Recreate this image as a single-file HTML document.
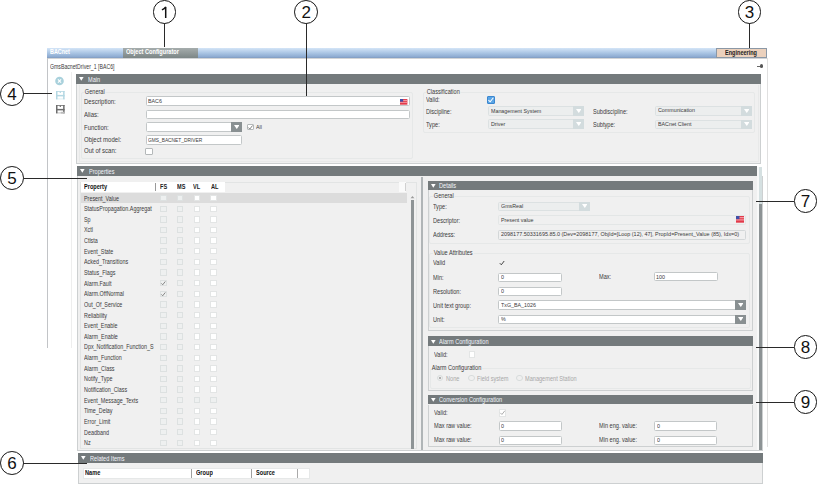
<!DOCTYPE html>
<html><head><meta charset="utf-8"><style>
html,body{margin:0;padding:0;width:818px;height:487px;overflow:hidden;background:#fff;position:relative}
div{position:absolute;box-sizing:border-box}
span.t{position:absolute;white-space:nowrap;font-family:"Liberation Sans",sans-serif;transform-origin:0 50%}
span.num{position:absolute;width:23.8px;height:23.8px;line-height:23.8px;text-align:center;font-family:"Liberation Sans",sans-serif;font-size:17px;color:#111}
.circ{width:23.8px;height:23.8px;border:1.15px solid #141414;border-radius:50%;background:#fff}
</style></head><body>
<div style="left:47.00px;top:47.50px;width:719.70px;height:10.20px;background:linear-gradient(#d4e5f7,#aac5e4 50%,#8aa8cf 92%,#7d95b8)"></div>
<span class="t" style="left:50.40px;top:49.40px;font-size:6.4px;line-height:6.4px;transform:scaleX(0.85);color:#fff;font-weight:bold;">BACnet</span>
<div style="left:122.60px;top:47.70px;width:75.50px;height:10.00px;background:linear-gradient(#a6adad,#7c8686)"></div>
<span class="t" style="left:126.00px;top:49.30px;font-size:6.6px;line-height:6.6px;transform:scaleX(0.85);color:#fff;font-weight:bold;">Object Configurator</span>
<div style="left:716.30px;top:48.30px;width:50.40px;height:9.40px;background:#ebd1bd;border:1px solid #8b98a6;box-sizing:border-box"></div>
<span class="t" style="left:725.00px;top:49.50px;font-size:6.6px;line-height:6.6px;transform:scaleX(0.84);color:#1c1c1c;font-weight:bold;">Engineering</span>
<div style="left:47.00px;top:57.80px;width:719.70px;height:1.00px;background:#d2d4d6"></div>
<div style="left:47.00px;top:57.70px;width:1.00px;height:290.00px;background:#c2c4c7"></div>
<div style="left:766.50px;top:57.70px;width:1.00px;height:389.30px;background:#e0e0e0"></div>
<span class="t" style="left:50.40px;top:62.50px;font-size:7.0px;line-height:7.0px;transform:scaleX(0.74);color:#3a3a3a;">GmsBacnetDriver_1 [BAC6]</span>
<div style="left:759.50px;top:64.40px;width:3.50px;height:3.50px;background:#555;border-radius:50%"></div>
<div style="left:757.20px;top:65.70px;width:2.80px;height:1.00px;background:#666"></div>
<svg style="position:absolute;left:54px;top:76px" width="11" height="11" viewBox="0 0 11 11"><circle cx="5.5" cy="5" r="4.3" fill="#a9d1dc"/><path d="M3.9 3.4 L7.1 6.6 M7.1 3.4 L3.9 6.6" stroke="#fff" stroke-width="1.2"/></svg>
<svg style="position:absolute;left:55.6px;top:91px" width="9" height="9" viewBox="0 0 9 9"><rect x="0" y="0" width="1.5" height="8.3" fill="#b4d8e3"/><rect x="7.1" y="0" width="1.5" height="8.3" fill="#b4d8e3"/><rect x="0" y="0" width="8.6" height="0.8" fill="#b4d8e3"/><rect x="0" y="3.9" width="8.6" height="1.5" fill="#b4d8e3"/><rect x="0" y="7.6" width="8.6" height="0.7" fill="#b4d8e3" opacity="0.6"/><rect x="3.7" y="0.5" width="1.2" height="1.5" fill="#b4d8e3"/></svg>
<svg style="position:absolute;left:55.6px;top:105.1px" width="9" height="9" viewBox="0 0 9 9"><rect x="0" y="0" width="1.5" height="8.3" fill="#6e6e6e"/><rect x="7.1" y="0" width="1.5" height="8.3" fill="#6e6e6e"/><rect x="0" y="0" width="8.6" height="0.8" fill="#6e6e6e"/><rect x="0" y="3.9" width="8.6" height="1.5" fill="#6e6e6e"/><rect x="0" y="7.6" width="8.6" height="0.7" fill="#6e6e6e" opacity="0.6"/><rect x="3.7" y="0.5" width="1.2" height="1.5" fill="#6e6e6e"/><rect x="4.8" y="6.8" width="3.8" height="1.8" fill="#bbb"/></svg>
<div style="left:71.00px;top:72.00px;width:1.00px;height:275.50px;background:#eeeeee"></div>
<div style="left:76.30px;top:83.80px;width:685.00px;height:80.20px;background:#f0f0f0;border:1px solid #cdd0d1;border-top:none;box-sizing:border-box"></div>
<div style="left:76.30px;top:74.00px;width:685.00px;height:9.80px;background:#747a7c"></div>
<svg style="position:absolute;left:79.40px;top:77.30px" width="5" height="4" viewBox="0 0 5 4"><path d="M0 0 H4.6 L2.3 3.8 Z" fill="#fff"/></svg>
<span class="t" style="left:87.90px;top:75.60px;font-size:7.0px;line-height:7.0px;transform:scaleX(0.8);color:#f2f4fa;">Main</span>
<div style="left:79.30px;top:84.50px;width:679.30px;height:77.70px;border:1px solid #e8e9e9;border-top:none;box-sizing:border-box"></div>
<div style="left:80.90px;top:91.70px;width:332.60px;height:67.30px;border:1px solid #e6e8e8;border-radius:2px;box-sizing:border-box"></div>
<span class="t" style="left:83.90px;top:88.20px;font-size:7.0px;line-height:7.0px;transform:scaleX(0.8);color:#3a3a3a;background:#f0f0f0;padding:0 1px;">General</span>
<span class="t" style="left:83.80px;top:97.80px;font-size:7.0px;line-height:7.0px;transform:scaleX(0.86);color:#3a3a3a;">Description:</span>
<span class="t" style="left:83.80px;top:110.70px;font-size:7.0px;line-height:7.0px;transform:scaleX(0.86);color:#3a3a3a;">Alias:</span>
<span class="t" style="left:83.80px;top:123.50px;font-size:7.0px;line-height:7.0px;transform:scaleX(0.86);color:#3a3a3a;">Function:</span>
<span class="t" style="left:83.80px;top:136.40px;font-size:7.0px;line-height:7.0px;transform:scaleX(0.86);color:#3a3a3a;">Object model:</span>
<span class="t" style="left:83.80px;top:147.20px;font-size:7.0px;line-height:7.0px;transform:scaleX(0.86);color:#3a3a3a;">Out of scan:</span>
<div style="left:145.50px;top:96.40px;width:264.50px;height:10.10px;background:#fff;border:1px solid #c3c7c8;border-radius:1.5px;box-sizing:border-box"></div>
<span class="t" style="left:148.30px;top:98.10px;font-size:6.2px;line-height:6.2px;transform:scaleX(0.86);color:#3a3a3a;">BAC6</span>
<svg style="position:absolute;left:400.40px;top:98.90px" width="7.40" height="5.70" viewBox="0 0 8 6" preserveAspectRatio="none"><rect width="8" height="6" fill="#e23a4a"/><rect y="1" width="8" height="1" fill="#f4a0a8"/><rect y="3" width="8" height="1" fill="#f4a0a8"/><rect width="3.4" height="2.8" fill="#4050a8"/></svg>
<div style="left:145.50px;top:109.70px;width:264.50px;height:9.80px;background:#fff;border:1px solid #c3c7c8;border-radius:1.5px;box-sizing:border-box"></div>
<div style="left:145.50px;top:122.20px;width:96.60px;height:10.20px;background:#fff;border:1px solid #c3c7c8;border-radius:1.5px;box-sizing:border-box"></div>
<div style="left:231.10px;top:122.20px;width:11.00px;height:10.20px;background:#899092"></div>
<svg style="position:absolute;left:233.80px;top:125.30px" width="5.6" height="4.2" viewBox="0 0 5.6 4.2"><path d="M0 0 H5.6 L2.8 4.1 Z" fill="#fff"/></svg>
<div style="left:247.00px;top:123.80px;width:6.80px;height:6.70px;background:#fff;border:1px solid #b4b8b9;border-radius:1px;box-sizing:border-box"></div>
<svg style="position:absolute;left:247.00px;top:123.80px" width="6.80" height="6.70" viewBox="0 0 8 8"><path d="M1.5 4.2 L3.3 6 L6.6 1.8" fill="none" stroke="#777" stroke-width="1.1"/></svg>
<span class="t" style="left:256.00px;top:123.90px;font-size:6.2px;line-height:6.2px;transform:scaleX(0.86);color:#3a3a3a;">All</span>
<div style="left:145.50px;top:135.40px;width:96.90px;height:9.80px;background:#fff;border:1px solid #c3c7c8;border-radius:1.5px;box-sizing:border-box"></div>
<span class="t" style="left:148.30px;top:136.90px;font-size:6.2px;line-height:6.2px;transform:scaleX(0.78);color:#3a3a3a;">GMS_BACNET_DRIVER</span>
<div style="left:145.40px;top:148.00px;width:7.40px;height:6.60px;background:#fff;border:1px solid #b4b8b9;border-radius:1px;box-sizing:border-box"></div>
<div style="left:423.40px;top:92.40px;width:332.10px;height:40.60px;border:1px solid #e6e8e8;border-radius:2px;box-sizing:border-box"></div>
<span class="t" style="left:426.40px;top:87.90px;font-size:7.0px;line-height:7.0px;transform:scaleX(0.8);color:#3a3a3a;background:#f0f0f0;padding:0 1px;">Classification</span>
<span class="t" style="left:425.80px;top:96.30px;font-size:7.0px;line-height:7.0px;transform:scaleX(0.8);color:#3a3a3a;">Valid:</span>
<span class="t" style="left:425.80px;top:107.70px;font-size:7.0px;line-height:7.0px;transform:scaleX(0.8);color:#3a3a3a;">Discipline:</span>
<span class="t" style="left:425.80px;top:120.60px;font-size:7.0px;line-height:7.0px;transform:scaleX(0.8);color:#3a3a3a;">Type:</span>
<div style="left:487.20px;top:96.10px;width:7.70px;height:7.70px;background:#5aa5e6;border:1px solid #3a86cf;border-radius:1px;box-sizing:border-box"></div>
<svg style="position:absolute;left:487.20px;top:96.10px" width="7.70" height="7.70" viewBox="0 0 8 8"><path d="M1.5 4.2 L3.3 6 L6.6 1.8" fill="none" stroke="#fff" stroke-width="1.1"/></svg>
<div style="left:487.60px;top:106.00px;width:96.50px;height:10.00px;background:#eceeee;border:1px solid #dce1e2;border-radius:1.5px;box-sizing:border-box"></div>
<div style="left:573.10px;top:106.00px;width:11.00px;height:10.00px;background:#d3dcde"></div>
<svg style="position:absolute;left:575.80px;top:109.00px" width="5.6" height="4.2" viewBox="0 0 5.6 4.2"><path d="M0 0 H5.6 L2.8 4.1 Z" fill="#fff"/></svg>
<span class="t" style="left:490.60px;top:107.50px;font-size:6.2px;line-height:6.2px;transform:scaleX(0.86);color:#3a3a3a;">Management System</span>
<div style="left:487.60px;top:119.20px;width:96.50px;height:10.00px;background:#eceeee;border:1px solid #dce1e2;border-radius:1.5px;box-sizing:border-box"></div>
<div style="left:573.10px;top:119.20px;width:11.00px;height:10.00px;background:#d3dcde"></div>
<svg style="position:absolute;left:575.80px;top:122.20px" width="5.6" height="4.2" viewBox="0 0 5.6 4.2"><path d="M0 0 H5.6 L2.8 4.1 Z" fill="#fff"/></svg>
<span class="t" style="left:490.60px;top:120.70px;font-size:6.2px;line-height:6.2px;transform:scaleX(0.86);color:#3a3a3a;">Driver</span>
<span class="t" style="left:593.40px;top:107.50px;font-size:7.0px;line-height:7.0px;transform:scaleX(0.8);color:#3a3a3a;">Subdiscipline:</span>
<span class="t" style="left:593.40px;top:120.60px;font-size:7.0px;line-height:7.0px;transform:scaleX(0.8);color:#3a3a3a;">Subtype:</span>
<div style="left:655.30px;top:106.00px;width:96.60px;height:9.80px;background:#eceeee;border:1px solid #dce1e2;border-radius:1.5px;box-sizing:border-box"></div>
<div style="left:740.90px;top:106.00px;width:11.00px;height:9.80px;background:#d3dcde"></div>
<svg style="position:absolute;left:743.60px;top:108.90px" width="5.6" height="4.2" viewBox="0 0 5.6 4.2"><path d="M0 0 H5.6 L2.8 4.1 Z" fill="#fff"/></svg>
<span class="t" style="left:658.30px;top:107.40px;font-size:6.2px;line-height:6.2px;transform:scaleX(0.86);color:#3a3a3a;">Communication</span>
<div style="left:655.30px;top:119.50px;width:96.60px;height:9.70px;background:#eceeee;border:1px solid #dce1e2;border-radius:1.5px;box-sizing:border-box"></div>
<div style="left:740.90px;top:119.50px;width:11.00px;height:9.70px;background:#d3dcde"></div>
<svg style="position:absolute;left:743.60px;top:122.35px" width="5.6" height="4.2" viewBox="0 0 5.6 4.2"><path d="M0 0 H5.6 L2.8 4.1 Z" fill="#fff"/></svg>
<span class="t" style="left:658.30px;top:120.85px;font-size:6.2px;line-height:6.2px;transform:scaleX(0.86);color:#3a3a3a;">BACnet Client</span>
<div style="left:76.50px;top:176.00px;width:686.30px;height:274.80px;background:#f0f0f0;border:1px solid #cdd0d1;border-top:none;box-sizing:border-box"></div>
<div style="left:77.00px;top:166.00px;width:679.70px;height:10.00px;background:#747a7c"></div>
<svg style="position:absolute;left:80.10px;top:169.30px" width="5" height="4" viewBox="0 0 5 4"><path d="M0 0 H4.6 L2.3 3.8 Z" fill="#fff"/></svg>
<span class="t" style="left:88.60px;top:167.70px;font-size:7.0px;line-height:7.0px;transform:scaleX(0.8);color:#f2f4fa;">Properties</span>
<div style="left:757.00px;top:166.50px;width:2.00px;height:283.30px;background:#f8f9f9"></div>
<div style="left:759.00px;top:166.50px;width:3.40px;height:37.10px;background:#d5e0e1"></div>
<div style="left:759.00px;top:203.60px;width:3.40px;height:246.20px;background:#8d9395"></div>
<div style="left:80.00px;top:181.50px;width:336.50px;height:267.10px;border:1px solid #e2e4e4;box-sizing:border-box;background:#f0f0f0"></div>
<div style="left:80.50px;top:182.00px;width:144.40px;height:9.80px;background:#fff"></div>
<div style="left:398.50px;top:182.00px;width:7.00px;height:9.80px;background:#fafafa"></div>
<div style="left:405.40px;top:183.00px;width:1.00px;height:7.50px;background:#d0d0d0"></div>
<div style="left:154.80px;top:183.00px;width:1.00px;height:7.50px;background:#9a9a9a"></div>
<span class="t" style="left:83.80px;top:183.10px;font-size:7.0px;line-height:7.0px;transform:scaleX(0.8);color:#111;font-weight:bold;">Property</span>
<span class="t" style="left:160.10px;top:183.10px;font-size:7.0px;line-height:7.0px;transform:scaleX(0.8);color:#222;font-weight:bold;">FS</span>
<span class="t" style="left:176.80px;top:183.10px;font-size:7.0px;line-height:7.0px;transform:scaleX(0.8);color:#222;font-weight:bold;">MS</span>
<span class="t" style="left:193.40px;top:183.10px;font-size:7.0px;line-height:7.0px;transform:scaleX(0.8);color:#222;font-weight:bold;">VL</span>
<span class="t" style="left:210.60px;top:183.10px;font-size:7.0px;line-height:7.0px;transform:scaleX(0.8);color:#222;font-weight:bold;">AL</span>
<div style="left:80.50px;top:193.40px;width:326.70px;height:9.20px;background:#dcdcdc"></div>
<span class="t" style="left:83.80px;top:194.50px;font-size:7.0px;line-height:7.0px;transform:scaleX(0.77);color:#3a3a3a;">Present_Value</span>
<div style="left:160.20px;top:194.90px;width:6.50px;height:6.40px;background:#eef0f0;border:1px solid #dde1e1;box-sizing:border-box"></div>
<div style="left:176.90px;top:194.90px;width:6.50px;height:6.40px;background:#eef0f0;border:1px solid #dde1e1;box-sizing:border-box"></div>
<div style="left:193.50px;top:194.90px;width:6.50px;height:6.40px;background:#fff;border:1px solid #e3e5e5;box-sizing:border-box"></div>
<div style="left:210.30px;top:194.90px;width:6.50px;height:6.40px;background:#fff;border:1px solid #e3e5e5;box-sizing:border-box"></div>
<span class="t" style="left:83.80px;top:205.14px;font-size:7.0px;line-height:7.0px;transform:scaleX(0.77);color:#3a3a3a;">StatusPropagation.Aggregat</span>
<div style="left:160.20px;top:205.54px;width:6.50px;height:6.40px;background:#eef0f0;border:1px solid #dde1e1;box-sizing:border-box"></div>
<div style="left:176.90px;top:205.54px;width:6.50px;height:6.40px;background:#eef0f0;border:1px solid #dde1e1;box-sizing:border-box"></div>
<div style="left:193.50px;top:205.54px;width:6.50px;height:6.40px;background:#fff;border:1px solid #e3e5e5;box-sizing:border-box"></div>
<div style="left:210.30px;top:205.54px;width:6.50px;height:6.40px;background:#fff;border:1px solid #e3e5e5;box-sizing:border-box"></div>
<span class="t" style="left:83.80px;top:215.78px;font-size:7.0px;line-height:7.0px;transform:scaleX(0.77);color:#3a3a3a;">Sp</span>
<div style="left:160.20px;top:216.18px;width:6.50px;height:6.40px;background:#eef0f0;border:1px solid #dde1e1;box-sizing:border-box"></div>
<div style="left:176.90px;top:216.18px;width:6.50px;height:6.40px;background:#eef0f0;border:1px solid #dde1e1;box-sizing:border-box"></div>
<div style="left:193.50px;top:216.18px;width:6.50px;height:6.40px;background:#fff;border:1px solid #e3e5e5;box-sizing:border-box"></div>
<div style="left:210.30px;top:216.18px;width:6.50px;height:6.40px;background:#fff;border:1px solid #e3e5e5;box-sizing:border-box"></div>
<span class="t" style="left:83.80px;top:226.42px;font-size:7.0px;line-height:7.0px;transform:scaleX(0.77);color:#3a3a3a;">Xctl</span>
<div style="left:160.20px;top:226.82px;width:6.50px;height:6.40px;background:#eef0f0;border:1px solid #dde1e1;box-sizing:border-box"></div>
<div style="left:176.90px;top:226.82px;width:6.50px;height:6.40px;background:#eef0f0;border:1px solid #dde1e1;box-sizing:border-box"></div>
<div style="left:193.50px;top:226.82px;width:6.50px;height:6.40px;background:#fff;border:1px solid #e3e5e5;box-sizing:border-box"></div>
<div style="left:210.30px;top:226.82px;width:6.50px;height:6.40px;background:#fff;border:1px solid #e3e5e5;box-sizing:border-box"></div>
<span class="t" style="left:83.80px;top:237.06px;font-size:7.0px;line-height:7.0px;transform:scaleX(0.77);color:#3a3a3a;">Ctlsta</span>
<div style="left:160.20px;top:237.46px;width:6.50px;height:6.40px;background:#eef0f0;border:1px solid #dde1e1;box-sizing:border-box"></div>
<div style="left:176.90px;top:237.46px;width:6.50px;height:6.40px;background:#eef0f0;border:1px solid #dde1e1;box-sizing:border-box"></div>
<div style="left:193.50px;top:237.46px;width:6.50px;height:6.40px;background:#fff;border:1px solid #e3e5e5;box-sizing:border-box"></div>
<div style="left:210.30px;top:237.46px;width:6.50px;height:6.40px;background:#fff;border:1px solid #e3e5e5;box-sizing:border-box"></div>
<span class="t" style="left:83.80px;top:247.70px;font-size:7.0px;line-height:7.0px;transform:scaleX(0.77);color:#3a3a3a;">Event_State</span>
<div style="left:160.20px;top:248.10px;width:6.50px;height:6.40px;background:#eef0f0;border:1px solid #dde1e1;box-sizing:border-box"></div>
<div style="left:176.90px;top:248.10px;width:6.50px;height:6.40px;background:#eef0f0;border:1px solid #dde1e1;box-sizing:border-box"></div>
<div style="left:193.50px;top:248.10px;width:6.50px;height:6.40px;background:#fff;border:1px solid #e3e5e5;box-sizing:border-box"></div>
<div style="left:210.30px;top:248.10px;width:6.50px;height:6.40px;background:#fff;border:1px solid #e3e5e5;box-sizing:border-box"></div>
<span class="t" style="left:83.80px;top:258.34px;font-size:7.0px;line-height:7.0px;transform:scaleX(0.77);color:#3a3a3a;">Acked_Transitions</span>
<div style="left:160.20px;top:258.74px;width:6.50px;height:6.40px;background:#eef0f0;border:1px solid #dde1e1;box-sizing:border-box"></div>
<div style="left:176.90px;top:258.74px;width:6.50px;height:6.40px;background:#eef0f0;border:1px solid #dde1e1;box-sizing:border-box"></div>
<div style="left:193.50px;top:258.74px;width:6.50px;height:6.40px;background:#fff;border:1px solid #e3e5e5;box-sizing:border-box"></div>
<div style="left:210.30px;top:258.74px;width:6.50px;height:6.40px;background:#fff;border:1px solid #e3e5e5;box-sizing:border-box"></div>
<span class="t" style="left:83.80px;top:268.98px;font-size:7.0px;line-height:7.0px;transform:scaleX(0.77);color:#3a3a3a;">Status_Flags</span>
<div style="left:160.20px;top:269.38px;width:6.50px;height:6.40px;background:#eef0f0;border:1px solid #dde1e1;box-sizing:border-box"></div>
<div style="left:176.90px;top:269.38px;width:6.50px;height:6.40px;background:#eef0f0;border:1px solid #dde1e1;box-sizing:border-box"></div>
<div style="left:193.50px;top:269.38px;width:6.50px;height:6.40px;background:#fff;border:1px solid #e3e5e5;box-sizing:border-box"></div>
<div style="left:210.30px;top:269.38px;width:6.50px;height:6.40px;background:#fff;border:1px solid #e3e5e5;box-sizing:border-box"></div>
<span class="t" style="left:83.80px;top:279.62px;font-size:7.0px;line-height:7.0px;transform:scaleX(0.77);color:#3a3a3a;">Alarm.Fault</span>
<div style="left:160.20px;top:280.02px;width:6.50px;height:6.40px;background:#eef0f0;border:1px solid #dde1e1;box-sizing:border-box"></div>
<svg style="position:absolute;left:160.20px;top:280.02px" width="6.50" height="6.40" viewBox="0 0 8 8"><path d="M1.5 4.2 L3.3 6 L6.6 1.8" fill="none" stroke="#777" stroke-width="1.1"/></svg>
<div style="left:176.90px;top:280.02px;width:6.50px;height:6.40px;background:#eef0f0;border:1px solid #dde1e1;box-sizing:border-box"></div>
<div style="left:193.50px;top:280.02px;width:6.50px;height:6.40px;background:#fff;border:1px solid #e3e5e5;box-sizing:border-box"></div>
<div style="left:210.30px;top:280.02px;width:6.50px;height:6.40px;background:#fff;border:1px solid #e3e5e5;box-sizing:border-box"></div>
<span class="t" style="left:83.80px;top:290.26px;font-size:7.0px;line-height:7.0px;transform:scaleX(0.77);color:#3a3a3a;">Alarm.OffNormal</span>
<div style="left:160.20px;top:290.66px;width:6.50px;height:6.40px;background:#eef0f0;border:1px solid #dde1e1;box-sizing:border-box"></div>
<svg style="position:absolute;left:160.20px;top:290.66px" width="6.50" height="6.40" viewBox="0 0 8 8"><path d="M1.5 4.2 L3.3 6 L6.6 1.8" fill="none" stroke="#777" stroke-width="1.1"/></svg>
<div style="left:176.90px;top:290.66px;width:6.50px;height:6.40px;background:#eef0f0;border:1px solid #dde1e1;box-sizing:border-box"></div>
<div style="left:193.50px;top:290.66px;width:6.50px;height:6.40px;background:#fff;border:1px solid #e3e5e5;box-sizing:border-box"></div>
<div style="left:210.30px;top:290.66px;width:6.50px;height:6.40px;background:#fff;border:1px solid #e3e5e5;box-sizing:border-box"></div>
<span class="t" style="left:83.80px;top:300.90px;font-size:7.0px;line-height:7.0px;transform:scaleX(0.77);color:#3a3a3a;">Out_Of_Service</span>
<div style="left:160.20px;top:301.30px;width:6.50px;height:6.40px;background:#eef0f0;border:1px solid #dde1e1;box-sizing:border-box"></div>
<div style="left:176.90px;top:301.30px;width:6.50px;height:6.40px;background:#eef0f0;border:1px solid #dde1e1;box-sizing:border-box"></div>
<div style="left:193.50px;top:301.30px;width:6.50px;height:6.40px;background:#fff;border:1px solid #e3e5e5;box-sizing:border-box"></div>
<div style="left:210.30px;top:301.30px;width:6.50px;height:6.40px;background:#fff;border:1px solid #e3e5e5;box-sizing:border-box"></div>
<span class="t" style="left:83.80px;top:311.54px;font-size:7.0px;line-height:7.0px;transform:scaleX(0.77);color:#3a3a3a;">Reliability</span>
<div style="left:160.20px;top:311.94px;width:6.50px;height:6.40px;background:#eef0f0;border:1px solid #dde1e1;box-sizing:border-box"></div>
<div style="left:176.90px;top:311.94px;width:6.50px;height:6.40px;background:#eef0f0;border:1px solid #dde1e1;box-sizing:border-box"></div>
<div style="left:193.50px;top:311.94px;width:6.50px;height:6.40px;background:#fff;border:1px solid #e3e5e5;box-sizing:border-box"></div>
<div style="left:210.30px;top:311.94px;width:6.50px;height:6.40px;background:#fff;border:1px solid #e3e5e5;box-sizing:border-box"></div>
<span class="t" style="left:83.80px;top:322.18px;font-size:7.0px;line-height:7.0px;transform:scaleX(0.77);color:#3a3a3a;">Event_Enable</span>
<div style="left:160.20px;top:322.58px;width:6.50px;height:6.40px;background:#eef0f0;border:1px solid #dde1e1;box-sizing:border-box"></div>
<div style="left:176.90px;top:322.58px;width:6.50px;height:6.40px;background:#eef0f0;border:1px solid #dde1e1;box-sizing:border-box"></div>
<div style="left:193.50px;top:322.58px;width:6.50px;height:6.40px;background:#fff;border:1px solid #e3e5e5;box-sizing:border-box"></div>
<div style="left:210.30px;top:322.58px;width:6.50px;height:6.40px;background:#fff;border:1px solid #e3e5e5;box-sizing:border-box"></div>
<span class="t" style="left:83.80px;top:332.82px;font-size:7.0px;line-height:7.0px;transform:scaleX(0.77);color:#3a3a3a;">Alarm_Enable</span>
<div style="left:160.20px;top:333.22px;width:6.50px;height:6.40px;background:#eef0f0;border:1px solid #dde1e1;box-sizing:border-box"></div>
<div style="left:176.90px;top:333.22px;width:6.50px;height:6.40px;background:#eef0f0;border:1px solid #dde1e1;box-sizing:border-box"></div>
<div style="left:193.50px;top:333.22px;width:6.50px;height:6.40px;background:#fff;border:1px solid #e3e5e5;box-sizing:border-box"></div>
<div style="left:210.30px;top:333.22px;width:6.50px;height:6.40px;background:#fff;border:1px solid #e3e5e5;box-sizing:border-box"></div>
<span class="t" style="left:83.80px;top:343.46px;font-size:7.0px;line-height:7.0px;transform:scaleX(0.77);color:#3a3a3a;">Dpx_Notification_Function_S</span>
<div style="left:160.20px;top:343.86px;width:6.50px;height:6.40px;background:#eef0f0;border:1px solid #dde1e1;box-sizing:border-box"></div>
<div style="left:176.90px;top:343.86px;width:6.50px;height:6.40px;background:#eef0f0;border:1px solid #dde1e1;box-sizing:border-box"></div>
<div style="left:193.50px;top:343.86px;width:6.50px;height:6.40px;background:#fff;border:1px solid #e3e5e5;box-sizing:border-box"></div>
<div style="left:210.30px;top:343.86px;width:6.50px;height:6.40px;background:#fff;border:1px solid #e3e5e5;box-sizing:border-box"></div>
<span class="t" style="left:83.80px;top:354.10px;font-size:7.0px;line-height:7.0px;transform:scaleX(0.77);color:#3a3a3a;">Alarm_Function</span>
<div style="left:160.20px;top:354.50px;width:6.50px;height:6.40px;background:#eef0f0;border:1px solid #dde1e1;box-sizing:border-box"></div>
<div style="left:176.90px;top:354.50px;width:6.50px;height:6.40px;background:#eef0f0;border:1px solid #dde1e1;box-sizing:border-box"></div>
<div style="left:193.50px;top:354.50px;width:6.50px;height:6.40px;background:#fff;border:1px solid #e3e5e5;box-sizing:border-box"></div>
<div style="left:210.30px;top:354.50px;width:6.50px;height:6.40px;background:#fff;border:1px solid #e3e5e5;box-sizing:border-box"></div>
<span class="t" style="left:83.80px;top:364.74px;font-size:7.0px;line-height:7.0px;transform:scaleX(0.77);color:#3a3a3a;">Alarm_Class</span>
<div style="left:160.20px;top:365.14px;width:6.50px;height:6.40px;background:#eef0f0;border:1px solid #dde1e1;box-sizing:border-box"></div>
<div style="left:176.90px;top:365.14px;width:6.50px;height:6.40px;background:#eef0f0;border:1px solid #dde1e1;box-sizing:border-box"></div>
<div style="left:193.50px;top:365.14px;width:6.50px;height:6.40px;background:#fff;border:1px solid #e3e5e5;box-sizing:border-box"></div>
<div style="left:210.30px;top:365.14px;width:6.50px;height:6.40px;background:#fff;border:1px solid #e3e5e5;box-sizing:border-box"></div>
<span class="t" style="left:83.80px;top:375.38px;font-size:7.0px;line-height:7.0px;transform:scaleX(0.77);color:#3a3a3a;">Notify_Type</span>
<div style="left:160.20px;top:375.78px;width:6.50px;height:6.40px;background:#eef0f0;border:1px solid #dde1e1;box-sizing:border-box"></div>
<div style="left:176.90px;top:375.78px;width:6.50px;height:6.40px;background:#eef0f0;border:1px solid #dde1e1;box-sizing:border-box"></div>
<div style="left:193.50px;top:375.78px;width:6.50px;height:6.40px;background:#fff;border:1px solid #e3e5e5;box-sizing:border-box"></div>
<div style="left:210.30px;top:375.78px;width:6.50px;height:6.40px;background:#fff;border:1px solid #e3e5e5;box-sizing:border-box"></div>
<span class="t" style="left:83.80px;top:386.02px;font-size:7.0px;line-height:7.0px;transform:scaleX(0.77);color:#3a3a3a;">Notification_Class</span>
<div style="left:160.20px;top:386.42px;width:6.50px;height:6.40px;background:#eef0f0;border:1px solid #dde1e1;box-sizing:border-box"></div>
<div style="left:176.90px;top:386.42px;width:6.50px;height:6.40px;background:#eef0f0;border:1px solid #dde1e1;box-sizing:border-box"></div>
<div style="left:193.50px;top:386.42px;width:6.50px;height:6.40px;background:#fff;border:1px solid #e3e5e5;box-sizing:border-box"></div>
<div style="left:210.30px;top:386.42px;width:6.50px;height:6.40px;background:#fff;border:1px solid #e3e5e5;box-sizing:border-box"></div>
<span class="t" style="left:83.80px;top:396.66px;font-size:7.0px;line-height:7.0px;transform:scaleX(0.77);color:#3a3a3a;">Event_Message_Texts</span>
<div style="left:160.20px;top:397.06px;width:6.50px;height:6.40px;background:#eef0f0;border:1px solid #dde1e1;box-sizing:border-box"></div>
<div style="left:176.90px;top:397.06px;width:6.50px;height:6.40px;background:#eef0f0;border:1px solid #dde1e1;box-sizing:border-box"></div>
<div style="left:193.50px;top:397.06px;width:6.50px;height:6.40px;background:#eef0f0;border:1px solid #dde1e1;box-sizing:border-box"></div>
<div style="left:210.30px;top:397.06px;width:6.50px;height:6.40px;background:#eef0f0;border:1px solid #dde1e1;box-sizing:border-box"></div>
<span class="t" style="left:83.80px;top:407.30px;font-size:7.0px;line-height:7.0px;transform:scaleX(0.77);color:#3a3a3a;">Time_Delay</span>
<div style="left:160.20px;top:407.70px;width:6.50px;height:6.40px;background:#eef0f0;border:1px solid #dde1e1;box-sizing:border-box"></div>
<div style="left:176.90px;top:407.70px;width:6.50px;height:6.40px;background:#eef0f0;border:1px solid #dde1e1;box-sizing:border-box"></div>
<div style="left:193.50px;top:407.70px;width:6.50px;height:6.40px;background:#fff;border:1px solid #e3e5e5;box-sizing:border-box"></div>
<div style="left:210.30px;top:407.70px;width:6.50px;height:6.40px;background:#fff;border:1px solid #e3e5e5;box-sizing:border-box"></div>
<span class="t" style="left:83.80px;top:417.94px;font-size:7.0px;line-height:7.0px;transform:scaleX(0.77);color:#3a3a3a;">Error_Limit</span>
<div style="left:160.20px;top:418.34px;width:6.50px;height:6.40px;background:#eef0f0;border:1px solid #dde1e1;box-sizing:border-box"></div>
<div style="left:176.90px;top:418.34px;width:6.50px;height:6.40px;background:#eef0f0;border:1px solid #dde1e1;box-sizing:border-box"></div>
<div style="left:193.50px;top:418.34px;width:6.50px;height:6.40px;background:#fff;border:1px solid #e3e5e5;box-sizing:border-box"></div>
<div style="left:210.30px;top:418.34px;width:6.50px;height:6.40px;background:#fff;border:1px solid #e3e5e5;box-sizing:border-box"></div>
<span class="t" style="left:83.80px;top:428.58px;font-size:7.0px;line-height:7.0px;transform:scaleX(0.77);color:#3a3a3a;">Deadband</span>
<div style="left:160.20px;top:428.98px;width:6.50px;height:6.40px;background:#eef0f0;border:1px solid #dde1e1;box-sizing:border-box"></div>
<div style="left:176.90px;top:428.98px;width:6.50px;height:6.40px;background:#eef0f0;border:1px solid #dde1e1;box-sizing:border-box"></div>
<div style="left:193.50px;top:428.98px;width:6.50px;height:6.40px;background:#fff;border:1px solid #e3e5e5;box-sizing:border-box"></div>
<div style="left:210.30px;top:428.98px;width:6.50px;height:6.40px;background:#fff;border:1px solid #e3e5e5;box-sizing:border-box"></div>
<span class="t" style="left:83.80px;top:439.22px;font-size:7.0px;line-height:7.0px;transform:scaleX(0.77);color:#3a3a3a;">Nz</span>
<div style="left:160.20px;top:439.62px;width:6.50px;height:6.40px;background:#eef0f0;border:1px solid #dde1e1;box-sizing:border-box"></div>
<div style="left:176.90px;top:439.62px;width:6.50px;height:6.40px;background:#eef0f0;border:1px solid #dde1e1;box-sizing:border-box"></div>
<div style="left:193.50px;top:439.62px;width:6.50px;height:6.40px;background:#fff;border:1px solid #e3e5e5;box-sizing:border-box"></div>
<div style="left:210.30px;top:439.62px;width:6.50px;height:6.40px;background:#fff;border:1px solid #e3e5e5;box-sizing:border-box"></div>
<svg style="position:absolute;left:410.3px;top:195px" width="5" height="4" viewBox="0 0 5 4"><path d="M0.6 3.2 L2.5 0.9 L4.4 3.2 Z" fill="#9a9a9a"/></svg>
<div style="left:410.80px;top:200.40px;width:3.60px;height:249.10px;background:#8e9496"></div>
<div style="left:421.00px;top:176.50px;width:2.30px;height:273.50px;background:#b0b5b7"></div>
<div style="left:427.60px;top:190.40px;width:325.40px;height:140.60px;background:#f0f0f0;border:1px solid #cdd0d1;border-top:none;box-sizing:border-box"></div>
<div style="left:427.60px;top:181.00px;width:325.00px;height:9.40px;background:#747a7c"></div>
<svg style="position:absolute;left:430.70px;top:184.30px" width="5" height="4" viewBox="0 0 5 4"><path d="M0 0 H4.6 L2.3 3.8 Z" fill="#fff"/></svg>
<span class="t" style="left:439.20px;top:182.40px;font-size:7.0px;line-height:7.0px;transform:scaleX(0.8);color:#f2f4fa;">Details</span>
<div style="left:428.60px;top:196.00px;width:321.20px;height:48.00px;border:1px solid #e6e8e8;border-radius:2px;box-sizing:border-box"></div>
<span class="t" style="left:432.70px;top:192.40px;font-size:7.0px;line-height:7.0px;transform:scaleX(0.8);color:#3a3a3a;background:#f0f0f0;padding:0 1px;">General</span>
<span class="t" style="left:432.70px;top:202.90px;font-size:7.0px;line-height:7.0px;transform:scaleX(0.8);color:#3a3a3a;">Type:</span>
<span class="t" style="left:432.70px;top:217.20px;font-size:7.0px;line-height:7.0px;transform:scaleX(0.8);color:#3a3a3a;">Descriptor:</span>
<span class="t" style="left:432.70px;top:231.10px;font-size:7.0px;line-height:7.0px;transform:scaleX(0.8);color:#3a3a3a;">Address:</span>
<div style="left:497.70px;top:202.00px;width:92.10px;height:8.80px;background:#eceeee;border:1px solid #dce1e2;border-radius:1.5px;box-sizing:border-box"></div>
<div style="left:578.80px;top:202.00px;width:11.00px;height:8.80px;background:#d3dcde"></div>
<svg style="position:absolute;left:581.50px;top:204.40px" width="5.6" height="4.2" viewBox="0 0 5.6 4.2"><path d="M0 0 H5.6 L2.8 4.1 Z" fill="#fff"/></svg>
<span class="t" style="left:500.70px;top:202.90px;font-size:6.2px;line-height:6.2px;transform:scaleX(0.86);color:#3a3a3a;">GmsReal</span>
<div style="left:497.70px;top:215.20px;width:248.10px;height:10.00px;background:#f0f0f0;border:1px solid #e3e6e6;border-radius:1.5px;box-sizing:border-box"></div>
<span class="t" style="left:501.00px;top:216.60px;font-size:6.2px;line-height:6.2px;transform:scaleX(0.86);color:#3a3a3a;">Present value</span>
<svg style="position:absolute;left:735.50px;top:216.30px" width="8.10" height="6.70" viewBox="0 0 8 6" preserveAspectRatio="none"><rect width="8" height="6" fill="#e23a4a"/><rect y="1" width="8" height="1" fill="#f4a0a8"/><rect y="3" width="8" height="1" fill="#f4a0a8"/><rect width="3.4" height="2.8" fill="#4050a8"/></svg>
<div style="left:497.70px;top:230.20px;width:248.10px;height:9.90px;background:#f0f0f0;border:1px solid #d3d7d8;border-radius:1.5px;box-sizing:border-box"></div>
<span class="t" style="left:500.60px;top:231.40px;font-size:6.2px;line-height:6.2px;transform:scaleX(0.88);color:#3a3a3a;">2098177.50331695.85.0 (Dev=2098177, ObjId=[Loop (12), 47], PropId=Present_Value (85), Idx=0)</span>
<div style="left:428.60px;top:252.80px;width:321.20px;height:75.20px;border:1px solid #e6e8e8;border-radius:2px;box-sizing:border-box"></div>
<span class="t" style="left:433.20px;top:248.60px;font-size:7.0px;line-height:7.0px;transform:scaleX(0.8);color:#3a3a3a;background:#f0f0f0;padding:0 1px;">Value Attributes</span>
<span class="t" style="left:432.70px;top:259.00px;font-size:7.0px;line-height:7.0px;transform:scaleX(0.8);color:#3a3a3a;">Valid</span>
<span class="t" style="left:432.70px;top:273.50px;font-size:7.0px;line-height:7.0px;transform:scaleX(0.8);color:#3a3a3a;">Min:</span>
<span class="t" style="left:432.70px;top:287.60px;font-size:7.0px;line-height:7.0px;transform:scaleX(0.8);color:#3a3a3a;">Resolution:</span>
<span class="t" style="left:432.70px;top:301.90px;font-size:7.0px;line-height:7.0px;transform:scaleX(0.8);color:#3a3a3a;">Unit text group:</span>
<span class="t" style="left:432.70px;top:315.80px;font-size:7.0px;line-height:7.0px;transform:scaleX(0.8);color:#3a3a3a;">Unit:</span>
<svg style="position:absolute;left:498.5px;top:259.8px" width="6" height="6" viewBox="0 0 6 6"><path d="M0.8 3.2 L2.3 4.8 L5.2 1" fill="none" stroke="#333" stroke-width="0.9"/></svg>
<div style="left:498.10px;top:272.60px;width:63.50px;height:9.20px;background:#fff;border:1px solid #c3c7c8;border-radius:1.5px;box-sizing:border-box"></div>
<span class="t" style="left:500.50px;top:273.80px;font-size:6.2px;line-height:6.2px;transform:scaleX(0.86);color:#3a3a3a;">0</span>
<span class="t" style="left:598.80px;top:273.00px;font-size:7.0px;line-height:7.0px;transform:scaleX(0.8);color:#3a3a3a;">Max:</span>
<div style="left:653.90px;top:272.40px;width:63.90px;height:9.10px;background:#fff;border:1px solid #c3c7c8;border-radius:1.5px;box-sizing:border-box"></div>
<span class="t" style="left:656.30px;top:273.60px;font-size:6.2px;line-height:6.2px;transform:scaleX(0.86);color:#3a3a3a;">100</span>
<div style="left:498.10px;top:286.70px;width:63.50px;height:9.10px;background:#fff;border:1px solid #c3c7c8;border-radius:1.5px;box-sizing:border-box"></div>
<span class="t" style="left:500.50px;top:287.80px;font-size:6.2px;line-height:6.2px;transform:scaleX(0.86);color:#3a3a3a;">0</span>
<div style="left:498.10px;top:300.40px;width:247.90px;height:9.70px;background:#fff;border:1px solid #c3c7c8;border-radius:1.5px;box-sizing:border-box"></div>
<div style="left:735.00px;top:300.40px;width:11.00px;height:9.70px;background:#899092"></div>
<svg style="position:absolute;left:737.70px;top:303.25px" width="5.6" height="4.2" viewBox="0 0 5.6 4.2"><path d="M0 0 H5.6 L2.8 4.1 Z" fill="#fff"/></svg>
<span class="t" style="left:501.10px;top:301.75px;font-size:6.2px;line-height:6.2px;transform:scaleX(0.86);color:#3a3a3a;">TxG_BA_1026</span>
<div style="left:498.10px;top:314.50px;width:247.90px;height:9.80px;background:#fff;border:1px solid #c3c7c8;border-radius:1.5px;box-sizing:border-box"></div>
<div style="left:735.00px;top:314.50px;width:11.00px;height:9.80px;background:#899092"></div>
<svg style="position:absolute;left:737.70px;top:317.40px" width="5.6" height="4.2" viewBox="0 0 5.6 4.2"><path d="M0 0 H5.6 L2.8 4.1 Z" fill="#fff"/></svg>
<span class="t" style="left:501.10px;top:315.90px;font-size:6.2px;line-height:6.2px;transform:scaleX(0.86);color:#3a3a3a;">%</span>
<div style="left:427.60px;top:346.00px;width:325.40px;height:44.80px;background:#f0f0f0;border:1px solid #cdd0d1;border-top:none;box-sizing:border-box"></div>
<div style="left:427.60px;top:336.20px;width:325.00px;height:9.80px;background:#747a7c"></div>
<svg style="position:absolute;left:430.70px;top:339.50px" width="5" height="4" viewBox="0 0 5 4"><path d="M0 0 H4.6 L2.3 3.8 Z" fill="#fff"/></svg>
<span class="t" style="left:439.20px;top:337.80px;font-size:7.0px;line-height:7.0px;transform:scaleX(0.8);color:#f2f4fa;">Alarm Configuration</span>
<span class="t" style="left:433.60px;top:350.70px;font-size:7.0px;line-height:7.0px;transform:scaleX(0.8);color:#3a3a3a;">Valid:</span>
<div style="left:468.90px;top:351.40px;width:6.60px;height:6.30px;background:#fff;border:1px solid #e3e5e5;box-sizing:border-box"></div>
<div style="left:430.20px;top:368.20px;width:320.50px;height:21.00px;border:1px solid #e6e8e8;border-radius:2px;box-sizing:border-box"></div>
<span class="t" style="left:431.30px;top:364.00px;font-size:7.0px;line-height:7.0px;transform:scaleX(0.8);color:#3a3a3a;background:#f0f0f0;padding:0 1px;">Alarm Configuration</span>
<div style="left:437.10px;top:374.80px;width:6.40px;height:6.40px;border:0.8px solid #d8dcdc;border-radius:50%;box-sizing:border-box"></div>
<div style="left:439.30px;top:377.00px;width:2.00px;height:2.00px;background:#999;border-radius:50%"></div>
<span class="t" style="left:446.00px;top:374.70px;font-size:7.0px;line-height:7.0px;transform:scaleX(0.8);color:#a8a8a8;">None</span>
<div style="left:468.20px;top:374.80px;width:6.40px;height:6.40px;border:0.8px solid #d8dcdc;border-radius:50%;box-sizing:border-box"></div>
<span class="t" style="left:477.30px;top:374.70px;font-size:7.0px;line-height:7.0px;transform:scaleX(0.8);color:#a8a8a8;">Field system</span>
<div style="left:516.20px;top:374.80px;width:6.40px;height:6.40px;border:0.8px solid #d8dcdc;border-radius:50%;box-sizing:border-box"></div>
<span class="t" style="left:525.30px;top:374.70px;font-size:7.0px;line-height:7.0px;transform:scaleX(0.8);color:#a8a8a8;">Management Station</span>
<div style="left:427.60px;top:404.50px;width:325.40px;height:42.90px;background:#f0f0f0;border:1px solid #cdd0d1;border-top:none;box-sizing:border-box"></div>
<div style="left:427.60px;top:394.60px;width:325.00px;height:9.90px;background:#747a7c"></div>
<svg style="position:absolute;left:430.70px;top:397.90px" width="5" height="4" viewBox="0 0 5 4"><path d="M0 0 H4.6 L2.3 3.8 Z" fill="#fff"/></svg>
<span class="t" style="left:439.20px;top:396.25px;font-size:7.0px;line-height:7.0px;transform:scaleX(0.8);color:#f2f4fa;">Conversion Configuration</span>
<span class="t" style="left:433.60px;top:409.20px;font-size:7.0px;line-height:7.0px;transform:scaleX(0.8);color:#3a3a3a;">Valid:</span>
<div style="left:498.50px;top:409.40px;width:7.10px;height:7.40px;background:#fff;border:1px solid #e3e5e5;box-sizing:border-box"></div>
<svg style="position:absolute;left:498.50px;top:409.40px" width="7.10" height="7.40" viewBox="0 0 8 8"><path d="M1.5 4.2 L3.3 6 L6.6 1.8" fill="none" stroke="#aaa" stroke-width="1.1"/></svg>
<span class="t" style="left:433.60px;top:422.30px;font-size:7.0px;line-height:7.0px;transform:scaleX(0.8);color:#3a3a3a;">Max raw value:</span>
<div style="left:498.50px;top:421.20px;width:63.30px;height:9.50px;background:#fff;border:1px solid #c3c7c8;border-radius:1.5px;box-sizing:border-box"></div>
<span class="t" style="left:501.00px;top:422.50px;font-size:6.2px;line-height:6.2px;transform:scaleX(0.86);color:#3a3a3a;">0</span>
<span class="t" style="left:599.00px;top:422.30px;font-size:7.0px;line-height:7.0px;transform:scaleX(0.8);color:#3a3a3a;">Min eng. value:</span>
<div style="left:654.30px;top:421.20px;width:63.20px;height:9.50px;background:#fff;border:1px solid #c3c7c8;border-radius:1.5px;box-sizing:border-box"></div>
<span class="t" style="left:656.80px;top:422.50px;font-size:6.2px;line-height:6.2px;transform:scaleX(0.86);color:#3a3a3a;">0</span>
<span class="t" style="left:433.60px;top:436.30px;font-size:7.0px;line-height:7.0px;transform:scaleX(0.8);color:#3a3a3a;">Max raw value:</span>
<div style="left:498.50px;top:435.50px;width:63.30px;height:9.70px;background:#fff;border:1px solid #c3c7c8;border-radius:1.5px;box-sizing:border-box"></div>
<span class="t" style="left:501.00px;top:436.50px;font-size:6.2px;line-height:6.2px;transform:scaleX(0.86);color:#3a3a3a;">0</span>
<span class="t" style="left:599.00px;top:436.30px;font-size:7.0px;line-height:7.0px;transform:scaleX(0.8);color:#3a3a3a;">Min eng. value:</span>
<div style="left:654.30px;top:435.50px;width:63.20px;height:9.70px;background:#fff;border:1px solid #c3c7c8;border-radius:1.5px;box-sizing:border-box"></div>
<span class="t" style="left:656.80px;top:436.50px;font-size:6.2px;line-height:6.2px;transform:scaleX(0.86);color:#3a3a3a;">0</span>
<div style="left:78.20px;top:463.00px;width:684.60px;height:20.60px;background:#f0f0f0;border:1px solid #cdd0d1;border-top:none;box-sizing:border-box"></div>
<div style="left:78.20px;top:453.00px;width:684.60px;height:10.00px;background:#747a7c"></div>
<svg style="position:absolute;left:81.30px;top:456.30px" width="5" height="4" viewBox="0 0 5 4"><path d="M0 0 H4.6 L2.3 3.8 Z" fill="#fff"/></svg>
<span class="t" style="left:89.80px;top:454.70px;font-size:7.0px;line-height:7.0px;transform:scaleX(0.8);color:#f2f4fa;">Related Items</span>
<div style="left:82.80px;top:467.50px;width:227.20px;height:11.60px;background:#fff;border:1px solid #e6e8e8;box-sizing:border-box"></div>
<span class="t" style="left:85.40px;top:469.40px;font-size:7.0px;line-height:7.0px;transform:scaleX(0.8);color:#111;font-weight:bold;">Name</span>
<div style="left:190.90px;top:469.00px;width:1.00px;height:8.50px;background:#a0a0a0"></div>
<span class="t" style="left:195.70px;top:469.40px;font-size:7.0px;line-height:7.0px;transform:scaleX(0.8);color:#111;font-weight:bold;">Group</span>
<div style="left:250.90px;top:469.00px;width:1.00px;height:8.50px;background:#a0a0a0"></div>
<span class="t" style="left:256.30px;top:469.40px;font-size:7.0px;line-height:7.0px;transform:scaleX(0.8);color:#111;font-weight:bold;">Source</span>
<div style="left:296.90px;top:469.00px;width:1.00px;height:8.50px;background:#aaa"></div>
<div class="circ" style="left:152.60px;top:-0.20px"></div>
<svg style="position:absolute;left:152.60px;top:-0.20px" width="24" height="24" viewBox="0 0 24 24"><path d="M12.7 6.9 V18.0" stroke="#111" stroke-width="1.5" fill="none"/><path d="M12.7 6.9 C11.9 8.3 10.6 9.2 8.9 9.8" stroke="#111" stroke-width="1.3" fill="none"/></svg>
<div style="left:164.00px;top:23.40px;width:1.00px;height:24.10px;background:#2a2a2a"></div>
<div class="circ" style="left:294.30px;top:-0.20px"></div>
<span class="num" style="left:294.30px;top:0.60px">2</span>
<div style="left:305.90px;top:23.40px;width:1.00px;height:72.80px;background:#2a2a2a"></div>
<div class="circ" style="left:737.50px;top:-0.20px"></div>
<span class="num" style="left:737.50px;top:0.60px">3</span>
<div style="left:748.90px;top:23.40px;width:1.00px;height:24.90px;background:#2a2a2a"></div>
<div class="circ" style="left:0.20px;top:81.75px"></div>
<span class="num" style="left:0.20px;top:82.55px">4</span>
<div style="left:23.40px;top:93.30px;width:29.10px;height:1.00px;background:#2a2a2a"></div>
<div class="circ" style="left:0.10px;top:165.80px"></div>
<span class="num" style="left:0.10px;top:166.60px">5</span>
<div style="left:23.50px;top:177.60px;width:63.70px;height:1.00px;background:#2a2a2a"></div>
<div class="circ" style="left:0.00px;top:451.10px"></div>
<span class="num" style="left:0.00px;top:451.90px">6</span>
<div style="left:23.30px;top:462.50px;width:64.10px;height:1.00px;background:#2a2a2a"></div>
<div class="circ" style="left:793.60px;top:189.30px"></div>
<span class="num" style="left:793.60px;top:190.10px">7</span>
<div style="left:756.00px;top:200.90px;width:38.00px;height:1.00px;background:#2a2a2a"></div>
<div class="circ" style="left:793.60px;top:335.10px"></div>
<span class="num" style="left:793.60px;top:335.90px">8</span>
<div style="left:756.00px;top:346.50px;width:38.00px;height:1.00px;background:#2a2a2a"></div>
<div class="circ" style="left:793.60px;top:390.30px"></div>
<span class="num" style="left:793.60px;top:391.10px">9</span>
<div style="left:756.00px;top:401.70px;width:38.00px;height:1.00px;background:#2a2a2a"></div>
</body></html>
